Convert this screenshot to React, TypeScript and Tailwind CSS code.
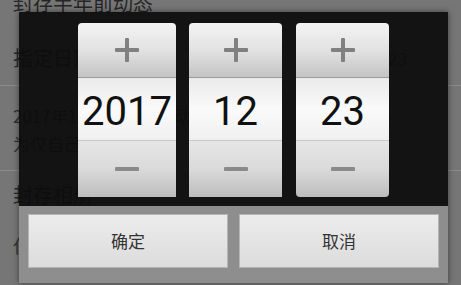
import React from 'react';

const cjk = { fontFamily: '"Noto Sans CJK SC", "Noto Sans", sans-serif' };

function Spinner({ value, wide }: { value: string; wide?: boolean }) {
  return (
    <div className={`${wide ? 'w-[98px]' : 'w-[93px]'} flex flex-col rounded-[4px] overflow-hidden`}>
      <div className="h-[55px] flex items-center justify-center bg-gradient-to-b from-[#f4f4f4] via-[#e2e2e2] to-[#c4c4c4] border-b border-[#9a9a9a]">
        <div className="relative w-[24px] h-[24px]">
          <div className="absolute left-0 top-[10px] w-[24px] h-[4px] bg-[#808080] rounded-[1px]" />
          <div className="absolute left-[10px] top-0 w-[4px] h-[24px] bg-[#808080] rounded-[1px]" />
        </div>
      </div>
      <div
        className="h-[62px] pt-[5px] flex items-center justify-center bg-gradient-to-b from-[#eaeaea] via-[#fafafa] to-[#f0f0f0] text-[40px] leading-none text-[#111]"
        style={{ fontFamily: 'Roboto, "Liberation Sans", sans-serif' }}
      >
        {value}
      </div>
      <div className="h-[57px] flex items-center justify-center bg-gradient-to-b from-[#e6e6e6] via-[#dadada] to-[#bdbdbd] border-t border-[#c8c8c8]">
        <div className="w-[24px] h-[4px] bg-[#8a8a8a] rounded-[1px]" />
      </div>
    </div>
  );
}

export default function App() {
  return (
    <div className="relative w-[461px] h-[285px] overflow-hidden bg-[#767676]" style={cjk}>
      {/* page behind the dialog */}
      <div className="flex flex-col text-[#262626]">
        <div className="px-[13px] -mt-[9px] text-[20px] leading-[24px]">封存半年前动态</div>
        <div className="mt-[22px] px-[13px] h-[42px] flex items-center justify-between text-[20px]">
          <span>指定日期</span>
          <span className="flex items-center gap-[28px]">
            <span className="text-[18px] text-[#333]">2017-12-23</span>
            <span className="text-[#3a6f80] text-[18px]">✓</span>
          </span>
        </div>
        <div className="mt-[6px] border-t border-[#8a8a8a]" />
        <div className="px-[13px] pt-[16px] text-[17px] leading-[28px] text-[#2e2e2e]">
          <div>2017年12月23日前的动态将被设置</div>
          <div>为仅自己可见</div>
        </div>
        <div className="mt-[12px] border-t border-[#8a8a8a]" />
        <div className="px-[13px] pt-[10px] text-[20px] leading-[28px]">封存相册</div>
        <div className="px-[13px] pt-[22px] text-[18px] leading-[28px] text-[#333]">仅自己可见</div>
      </div>

      {/* dialog */}
      <div className="absolute left-[19px] top-[12px] w-[429px] h-[271px] flex flex-col shadow-[0_0_6px_rgba(0,0,0,0.5)]">
        <div className="h-[194px] bg-[#0c0c0c]/[0.93] flex justify-center gap-[13px] pt-[11px]">
          <Spinner value="2017" wide />
          <Spinner value="12" />
          <div className="ml-[1px]">
            <Spinner value="23" />
          </div>
        </div>
        <div className="flex-1 bg-[#8e8e8e] flex gap-[11px] px-[9px] pt-[8px] pb-[15px]">
          <button className="flex-1 bg-gradient-to-b from-[#ececec] to-[#dcdcdc] border border-[#b5b5b5] text-[17px] text-[#333] flex items-center justify-center">
            确定
          </button>
          <button className="flex-1 bg-gradient-to-b from-[#ececec] to-[#dcdcdc] border border-[#b5b5b5] text-[17px] text-[#333] flex items-center justify-center">
            取消
          </button>
        </div>
      </div>
    </div>
  );
}
